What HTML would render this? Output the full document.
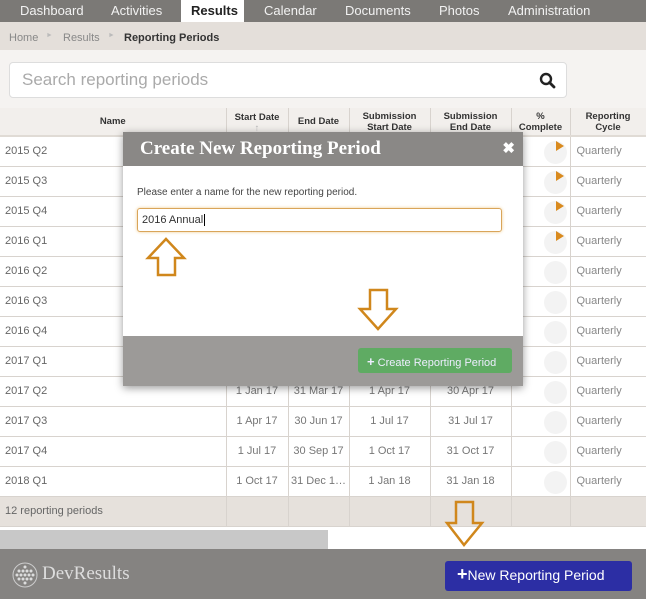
<!DOCTYPE html>
<html><head><meta charset="utf-8"><style>
*{box-sizing:border-box;margin:0;padding:0}
body{width:646px;height:599px;overflow:hidden;background:#fff;font-family:"Liberation Sans",sans-serif;position:relative;color:#555}
.abs{position:absolute}
.nav{left:0;top:0;width:646px;height:22px;background:#7b7976}
.nav span{position:absolute;top:3px;font-size:13px;color:#f2f2f2}
.crumb{left:0;top:22px;width:646px;height:28px;background:#e4dfda;font-size:11px;color:#888}
.sarea{left:0;top:50px;width:646px;height:58px;background:#f5f3f1}
.search{left:9px;top:62px;width:558px;height:36px;background:#fff;border:1px solid #ddd;border-radius:4px}
table{position:absolute;left:0;top:108px;border-collapse:collapse;width:646px;table-layout:fixed;font-size:11px}
th{background:#f2efec;height:28px;font-size:9.5px;color:#333;border-right:1px solid #d8d3ce;border-bottom:2px solid #e0dbd5;line-height:11px;font-weight:bold}
td{height:30px;border-bottom:1px solid #d8d3ce;border-right:1px solid #d8d3ce;text-align:center;color:#777}
td.n{text-align:left;padding-left:5px;color:#666}
td.c{text-align:left;padding-left:6px;color:#888}
tr.f td{background:#e6e1dc;height:30px}
td.p{position:relative}
.pie{position:absolute;left:32px;top:4px;width:23px;height:23px;border-radius:50%;background:#f3f3f3}
.modal{left:123px;top:132px;width:400px;height:254px;background:#fff;box-shadow:0 2px 8px rgba(0,0,0,.4)}
.mh{position:absolute;left:0;top:0;width:400px;height:34px;background:#8a8886;color:#fff;font-family:"Liberation Serif",serif;font-size:19px;font-weight:bold;padding:6px 0 0 17px}
.mf{position:absolute;left:0;top:204px;width:400px;height:50px;background:#9c9a98}
.btn{position:absolute;left:235px;top:12px;width:154px;height:25px;background:#5fab63;border-radius:3px;color:#eef;font-size:11px;padding:6px 0 0 9px}
.inp{position:absolute;left:14px;top:76px;width:365px;height:24px;border:1px solid #d9a55a;border-radius:3px;font-size:11px;color:#333;padding:5px 4px;box-shadow:0 0 3px #f0cb90}
.bar{left:0;top:549px;width:646px;height:50px;background:#858381}
.nbtn{left:445px;top:561px;width:187px;height:30px;background:#2c2ea4;border-radius:3px;color:#fff;font-size:14px;padding:6px 0 0 12px}
</style></head><body>
<div class="abs nav">
<span style="left:20px">Dashboard</span><span style="left:111px">Activities</span>
<div class="abs" style="left:181px;top:0;width:63px;height:22px;background:#fff"></div>
<span style="left:191px;color:#222;font-weight:bold">Results</span>
<span style="left:264px">Calendar</span><span style="left:345px">Documents</span><span style="left:439px">Photos</span><span style="left:508px">Administration</span>
</div>
<div class="abs crumb"><span class="abs" style="left:9px;top:10px">Home</span><span class="abs" style="left:46px;top:10px;font-size:7px;color:#bbb">►</span><span class="abs" style="left:63px;top:10px">Results</span><span class="abs" style="left:108px;top:10px;font-size:7px;color:#bbb">►</span><span class="abs" style="left:124px;top:10px;color:#333;font-weight:bold">Reporting Periods</span></div>
<div class="abs sarea"></div>
<div class="abs search"><span class="abs" style="left:12px;top:7px;font-size:17px;color:#aaa">Search reporting periods</span>
<svg class="abs" style="left:529px;top:9px" width="17" height="17" viewBox="0 0 17 17"><circle cx="7" cy="7" r="5" fill="none" stroke="#222" stroke-width="2.4"/><line x1="10.5" y1="10.5" x2="15" y2="15" stroke="#222" stroke-width="2.8" stroke-linecap="round"/></svg></div>
<table>
<colgroup><col style="width:226px"><col style="width:62px"><col style="width:61px"><col style="width:81px"><col style="width:81px"><col style="width:59px"><col style="width:76px"></colgroup>
<tr><th>Name</th><th style="vertical-align:top;padding-top:4px">Start Date<br><span style="color:#bbb">↑</span></th><th>End Date</th><th>Submission<br>Start Date</th><th>Submission<br>End Date</th><th>%<br>Complete</th><th>Reporting<br>Cycle</th></tr>
<tr><td class="n">2015 Q2</td><td></td><td></td><td></td><td></td><td class="p"><span class="pie"></span></td><td class="c">Quarterly</td></tr>
<tr><td class="n">2015 Q3</td><td></td><td></td><td></td><td></td><td class="p"><span class="pie"></span></td><td class="c">Quarterly</td></tr>
<tr><td class="n">2015 Q4</td><td></td><td></td><td></td><td></td><td class="p"><span class="pie"></span></td><td class="c">Quarterly</td></tr>
<tr><td class="n">2016 Q1</td><td></td><td></td><td></td><td></td><td class="p"><span class="pie"></span></td><td class="c">Quarterly</td></tr>
<tr><td class="n">2016 Q2</td><td></td><td></td><td></td><td></td><td class="p"><span class="pie"></span></td><td class="c">Quarterly</td></tr>
<tr><td class="n">2016 Q3</td><td></td><td></td><td></td><td></td><td class="p"><span class="pie"></span></td><td class="c">Quarterly</td></tr>
<tr><td class="n">2016 Q4</td><td></td><td></td><td></td><td></td><td class="p"><span class="pie"></span></td><td class="c">Quarterly</td></tr>
<tr><td class="n">2017 Q1</td><td></td><td></td><td></td><td></td><td class="p"><span class="pie"></span></td><td class="c">Quarterly</td></tr>
<tr><td class="n">2017 Q2</td><td>1 Jan 17</td><td>31 Mar 17</td><td>1 Apr 17</td><td>30 Apr 17</td><td class="p"><span class="pie"></span></td><td class="c">Quarterly</td></tr>
<tr><td class="n">2017 Q3</td><td>1 Apr 17</td><td>30 Jun 17</td><td>1 Jul 17</td><td>31 Jul 17</td><td class="p"><span class="pie"></span></td><td class="c">Quarterly</td></tr>
<tr><td class="n">2017 Q4</td><td>1 Jul 17</td><td>30 Sep 17</td><td>1 Oct 17</td><td>31 Oct 17</td><td class="p"><span class="pie"></span></td><td class="c">Quarterly</td></tr>
<tr><td class="n">2018 Q1</td><td>1 Oct 17</td><td>31 Dec 1…</td><td>1 Jan 18</td><td>31 Jan 18</td><td class="p"><span class="pie"></span></td><td class="c">Quarterly</td></tr>
<tr class="f"><td class="n">12 reporting periods</td><td></td><td></td><td></td><td></td><td></td><td></td></tr>
</table>
<svg class="abs" style="left:549px;top:137px" width="20" height="110"><polygon points="7,4 15,9 7,14" fill="#d98a1e"/><polygon points="7,34 15,39 7,44" fill="#d98a1e"/><polygon points="7,64 15,69 7,74" fill="#d98a1e"/><polygon points="7,94 15,99 7,104" fill="#d98a1e"/></svg>
<div class="abs" style="left:0;top:530px;width:328px;height:19px;background:#c8c8c8"></div>
<div class="abs modal">
<div class="mh">Create New Reporting Period<span class="abs" style="right:8px;top:7px;font-family:'Liberation Sans',sans-serif;font-size:15px;font-weight:bold">✖</span></div>
<div class="abs" style="left:14px;top:55px;font-size:10px;color:#444">Please enter a name for the new reporting period.</div>
<div class="inp">2016 Annual<span style="border-left:1px solid #000;margin-left:1px"></span></div>
<div class="mf"><div class="btn"><b style="font-size:13px">+</b> Create Reporting Period</div></div>
</div>
<svg class="abs" style="left:145px;top:236px" width="44" height="42"><polygon points="21,3 39,22 30,22 30,39 13,39 13,22 3,22" fill="none" stroke="#d0871c" stroke-width="2.5"/></svg>
<svg class="abs" style="left:357px;top:287px" width="44" height="46"><polygon points="13,3 30,3 30,22 39,22 21,42 3,22 13,22" fill="none" stroke="#d0871c" stroke-width="2.5"/></svg>
<svg class="abs" style="left:444px;top:500px" width="42" height="48"><polygon points="12,2 29,2 29,23 38,23 20,45 3,23 12,23" fill="none" stroke="#d0871c" stroke-width="2.5"/></svg>
<div class="abs bar"></div>
<svg class="abs" style="left:10px;top:561px" width="30" height="28"><circle cx="15" cy="14" r="12" fill="none" stroke="#ccc" stroke-width="1"/><g fill="#ddd"><circle cx="9" cy="10" r="1.5"/><circle cx="13" cy="10" r="1.5"/><circle cx="17" cy="10" r="1.5"/><circle cx="21" cy="10" r="1.5"/><circle cx="7" cy="14" r="1.5"/><circle cx="11" cy="14" r="1.5"/><circle cx="15" cy="14" r="1.5"/><circle cx="19" cy="14" r="1.5"/><circle cx="23" cy="14" r="1.5"/><circle cx="9" cy="18" r="1.5"/><circle cx="13" cy="18" r="1.5"/><circle cx="17" cy="18" r="1.5"/><circle cx="21" cy="18" r="1.5"/><circle cx="15" cy="6" r="1.5"/><circle cx="15" cy="22" r="1.5"/></g></svg>
<div class="abs" style="left:42px;top:563px;font-family:'Liberation Serif',serif;font-size:19px;color:#ddd">DevResults</div>
<div class="abs nbtn"><b style="font-size:18px;line-height:14px">+</b>New Reporting Period</div>
</body></html>
